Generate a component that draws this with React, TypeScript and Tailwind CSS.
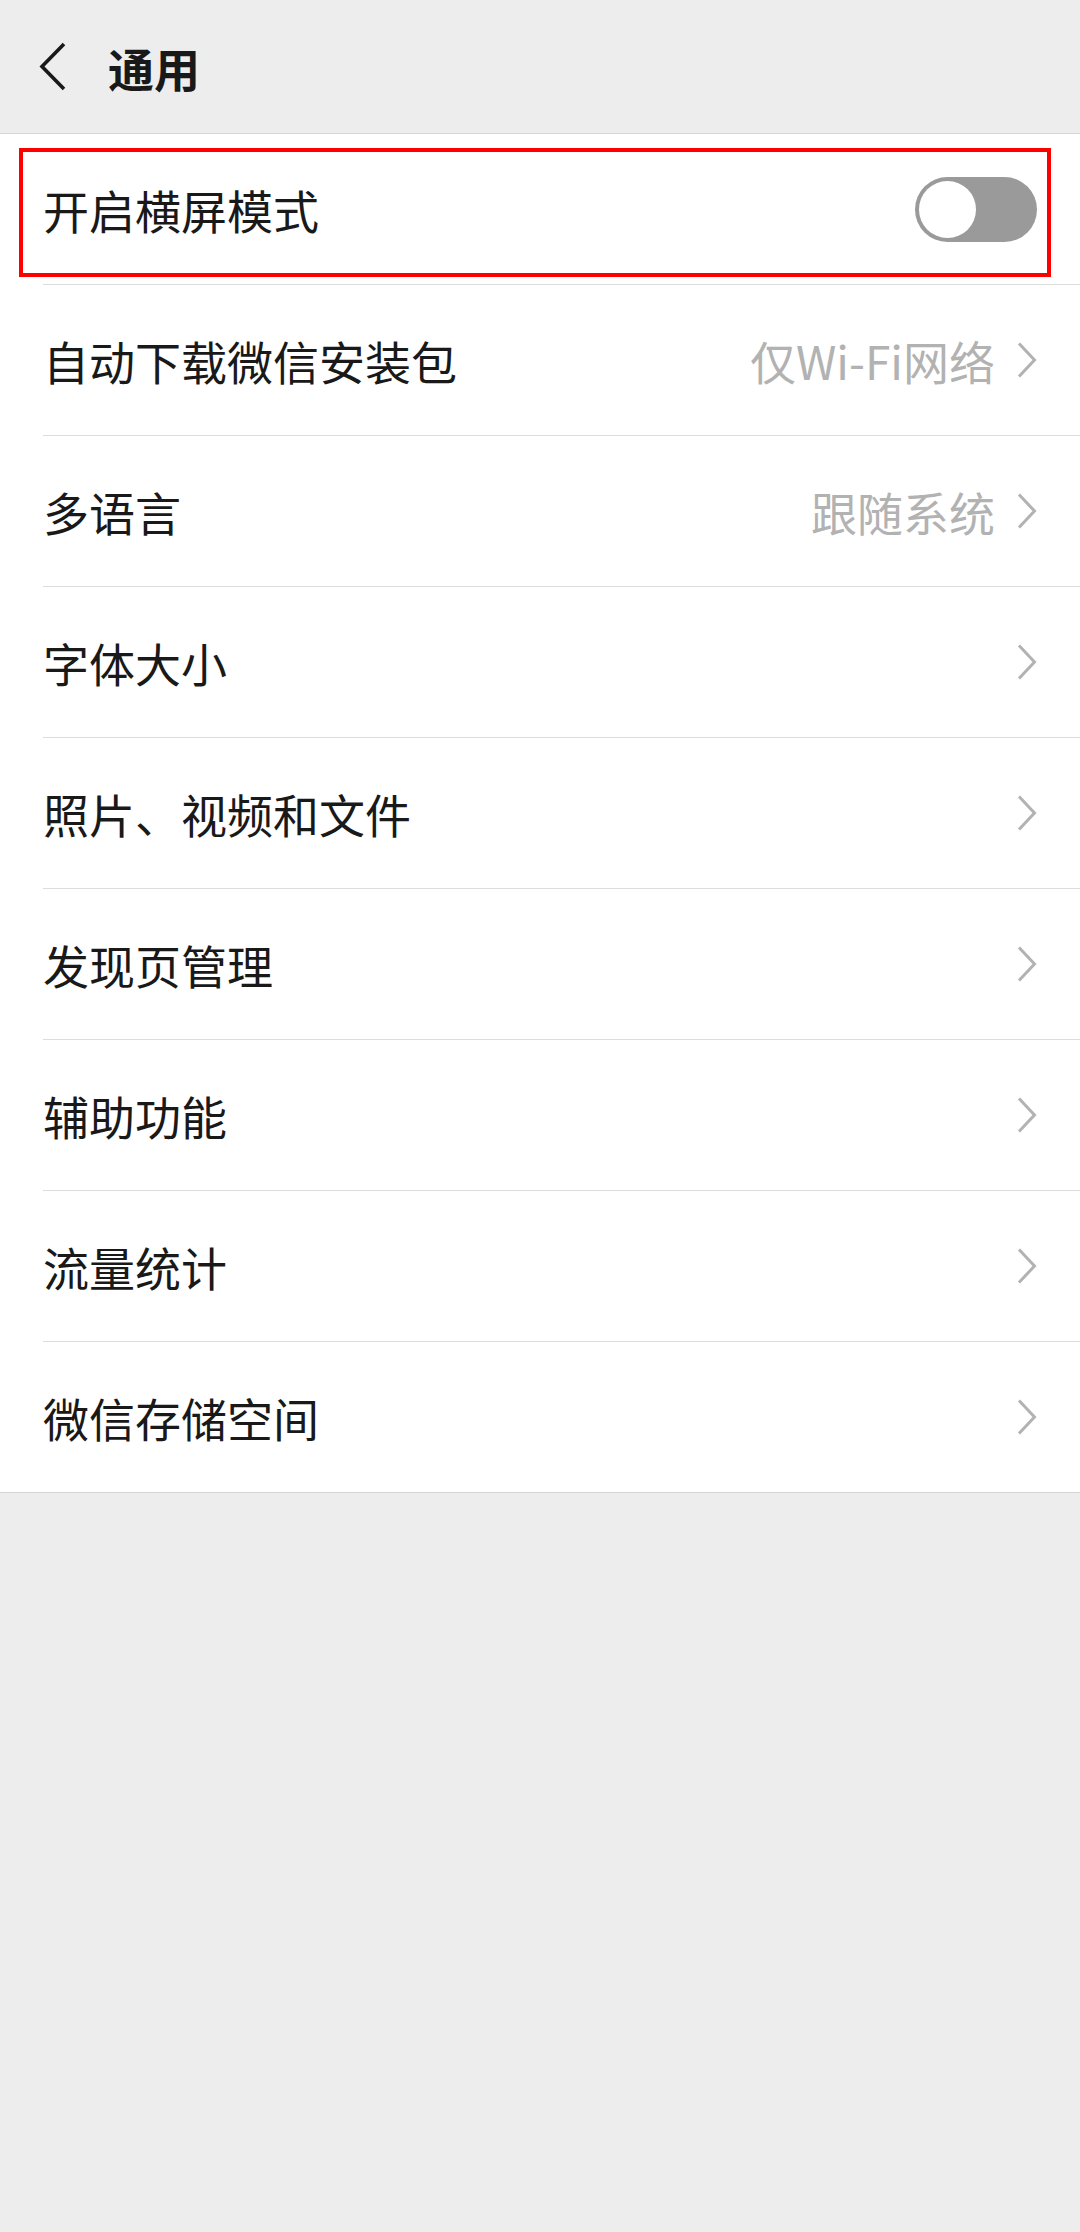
import React from "react";

const rows: { label: string; value?: string }[] = [
  { label: "自动下载微信安装包", value: "仅Wi-Fi网络" },
  { label: "多语言", value: "跟随系统" },
  { label: "字体大小" },
  { label: "照片、视频和文件" },
  { label: "发现页管理" },
  { label: "辅助功能" },
  { label: "流量统计" },
  { label: "微信存储空间" },
];

const Chevron = () => (
  <svg width="20" height="36" viewBox="0 0 20 36" fill="none" className="shrink-0">
    <path d="M2 1.5 L17.5 18 L2 34.5" stroke="#b2b2b2" strokeWidth="3" />
  </svg>
);

const App = () => {
  return (
    <div
      className="w-[1080px] min-h-[2232px] bg-[#ededed] text-[#191919]"
      style={{ fontFamily: '"Noto Sans CJK SC", "Noto Sans", sans-serif' }}
    >
      {/* Header */}
      <div className="h-[134px] flex items-center border-b border-[#d6d6d6]">
        <svg width="30" height="50" viewBox="0 0 30 50" fill="none" className="ml-[38px]">
          <path d="M26 2 L4 24.5 L26 47" stroke="#191919" strokeWidth="3.6" />
        </svg>
        <h1 className="ml-[40px] text-[46px] font-bold leading-none">通用</h1>
      </div>

      {/* Settings list */}
      <div className="bg-white border-b border-[#d6d6d6]">
        <div className="relative">
          <div className="ml-[43px] h-[151px] border-b border-[#dcdcdc] flex items-center justify-between pr-[43px]">
            <span className="text-[46px] leading-none">开启横屏模式</span>
            <div className="w-[122px] h-[65px] rounded-full bg-[#9a9a9a] flex items-center pl-[4px]">
              <div className="w-[57px] h-[57px] rounded-full bg-white" />
            </div>
          </div>
          <div className="absolute left-[19px] right-[29px] top-[14px] h-[129px] border-[4px] border-[#ff0000]" />
        </div>

        {rows.map((row, i) => (
          <div
            key={row.label}
            className={
              i === rows.length - 1
                ? "ml-[43px] h-[150px] flex items-center justify-between pr-[43px]"
                : "ml-[43px] h-[151px] border-b border-[#dcdcdc] flex items-center justify-between pr-[43px]"
            }
          >
            <span className="text-[46px] leading-none">{row.label}</span>
            <div className="flex items-center gap-[22px]">
              {row.value && (
                <span className="text-[46px] leading-none text-[#b2b2b2]">{row.value}</span>
              )}
              <Chevron />
            </div>
          </div>
        ))}
      </div>
    </div>
  );
};

export default App;
